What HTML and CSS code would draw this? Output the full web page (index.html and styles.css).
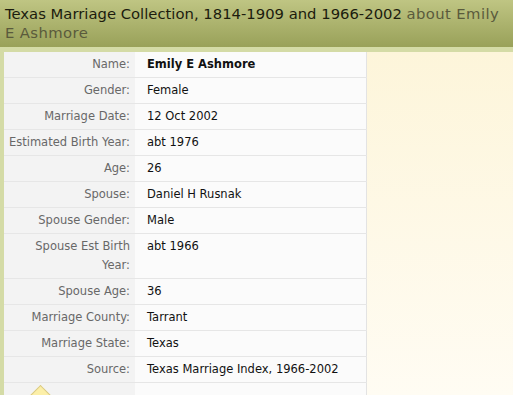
FILE: index.html
```html
<!DOCTYPE html>
<html>
<head>
<meta charset="utf-8">
<link rel="stylesheet" href="styles.css">
</head>
<body>
<div class="header">
  <h1 class="title">Texas Marriage Collection, 1814-1909 and 1966-2002 <span class="about">about Emily E Ashmore</span></h1>
</div>
<div class="main">
  <table class="record">
    <tr><th>Name:</th><td class="strong">Emily E Ashmore</td></tr>
    <tr><th>Gender:</th><td>Female</td></tr>
    <tr><th>Marriage Date:</th><td>12 Oct 2002</td></tr>
    <tr><th>Estimated Birth Year:</th><td>abt 1976</td></tr>
    <tr><th>Age:</th><td>26</td></tr>
    <tr><th>Spouse:</th><td>Daniel H Rusnak</td></tr>
    <tr><th>Spouse Gender:</th><td>Male</td></tr>
    <tr><th>Spouse Est Birth Year:</th><td>abt 1966</td></tr>
    <tr><th>Spouse Age:</th><td>36</td></tr>
    <tr><th>Marriage County:</th><td>Tarrant</td></tr>
    <tr><th>Marriage State:</th><td>Texas</td></tr>
    <tr><th>Source:</th><td>Texas Marriage Index, 1966-2002</td></tr>
    <tr class="tip-row"><th><span class="tip"></span></th><td></td></tr>
  </table>
  <div class="side"></div>
</div>
</body>
</html>
```
FILE: styles.css
```css
html, body {
  margin: 0;
  padding: 0;
  background: #fffcf2;
}
body {
  font-family: "DejaVu Sans", sans-serif;
  height: 395px;
  overflow: hidden;
  display: flex;
  flex-direction: column;
}
.header {
  background: linear-gradient(to bottom, #bfc583, #99a159);
  padding: 4px 12px 5px 5px;
}
.title {
  margin: 0;
  font-weight: normal;
  font-size: 14.8px;
  line-height: 19px;
  color: #1c1c0e;
}
.about {
  color: #5a5a3c;
  letter-spacing: 0.4px;
}
.main {
  flex: 1;
  min-height: 0;
  overflow: hidden;
  display: flex;
  border-top: 5px solid #d4dba6;
  border-left: 4px solid #d4dba6;
  background: linear-gradient(to bottom, #fdf5da, #fffcf3);
}
.record {
  width: 363px;
  border-collapse: collapse;
  border-right: 1px solid #e3e3e3;
  align-self: flex-start;
  font-size: 11.5px;
}
.record th, .record td {
  line-height: 19px;
  padding: 3px 0;
  border-bottom: 1px solid #e6e6e6;
  vertical-align: top;
}
.record th {
  width: 126px;
  padding-right: 5px;
  text-align: right;
  font-weight: normal;
  color: #686868;
  background: #f3f3f3;
}
.record td {
  padding-left: 12px;
  color: #111;
  background: #fbfbfb;
}
.record td.strong {
  font-weight: bold;
}
.tip-row th {
  position: relative;
  height: 19px;
}
.tip {
  position: absolute;
  left: 29px;
  top: 5px;
  width: 14px;
  height: 14px;
  background: #fcefa8;
  border-left: 1px solid #d8c884;
  border-top: 1px solid #d8c884;
  transform: rotate(45deg);
}
.side {
  flex: 1;
}
```
